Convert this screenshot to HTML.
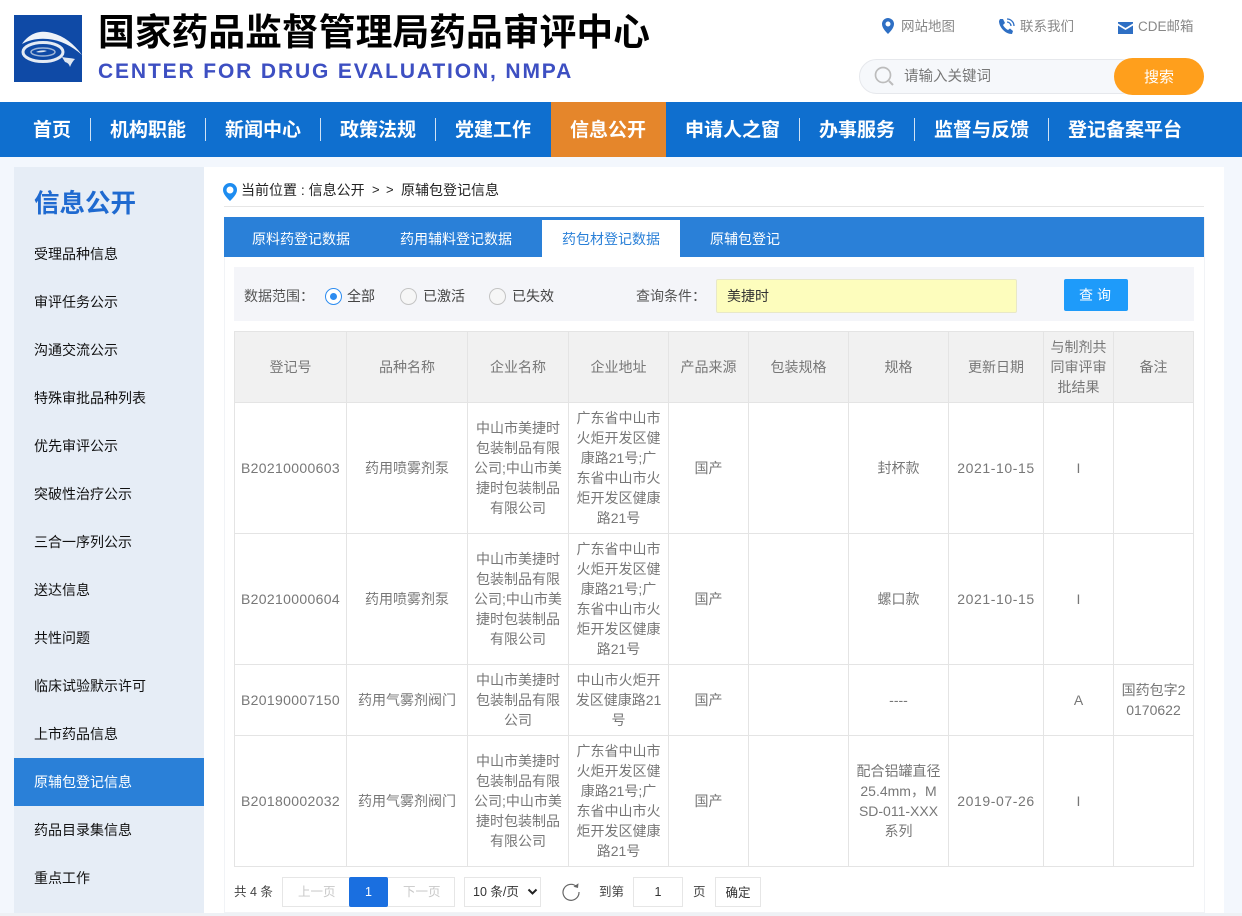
<!DOCTYPE html>
<html lang="zh-CN"><head><meta charset="utf-8"><title>信息公开</title>
<style>
*{box-sizing:border-box;margin:0;padding:0}
html,body{width:1242px;height:916px;overflow:hidden;background:#f3f7fd;font-family:"Liberation Sans","Noto Sans CJK SC",sans-serif;color:#666}
.a{position:absolute;white-space:nowrap}
#hd{position:absolute;left:0;top:0;width:1242px;height:102px;background:#fff}
#nav{position:absolute;left:0;top:102px;width:1242px;height:55px;background:#0f6fcf}
#nav span{position:absolute;top:1px;line-height:55px;font-size:19px;font-weight:700;color:#fff;white-space:nowrap}
#nav i{position:absolute;top:16px;width:1px;height:23px;background:#cfe2f5}
#side{position:absolute;left:14px;top:167px;width:190px;height:746px;background:#e6edf6}
#side div{position:absolute;left:0;width:190px;height:48px;line-height:48px;padding-left:20px;font-size:14px;color:#111}
#main{position:absolute;left:204px;top:167px;width:1020px;height:746px;background:#fff}
table{position:absolute;left:234px;top:331px;width:959px;border-collapse:collapse;table-layout:fixed;font-size:14px;line-height:20px;color:#777;text-align:center}
td,th{border:1px solid #e4e4e4;padding:0;font-weight:400;vertical-align:middle}
th{background:#f1f1f1;color:#777}
.n{letter-spacing:.34px}
.d{letter-spacing:.6px}
.radio{position:absolute;top:288px;width:17px;height:17px;border-radius:50%;border:1px solid #c4c4c4;background:#f6f6f6}
.pg{position:absolute;top:877px;height:30px;border:1px solid #e6e6e6;background:#fff;font-size:12.5px;line-height:29px;text-align:center}
</style></head><body>
<div id="hd">
<svg class="a" style="left:14px;top:15px" width="72" height="68" viewBox="0 0 72 68"><rect width="68" height="67" fill="#0f4aa6"/><path d="M8 29C16 17 28 15 38 18C50 21 60 29 68 40C58 31 46 25 34 24C24 23 15 25 8 29Z" fill="#eef3f9"/><ellipse cx="29" cy="37" rx="20" ry="9.500" fill="none" stroke="#e4ebf4" stroke-width="3"/><ellipse cx="29" cy="37" rx="12" ry="4" fill="none" stroke="#9fb6d8" stroke-width="1.500"/><path d="M22 37c4-2 8-2 11-1-3 1-6 2-11 1zM48 42c5 1 9 1 13 2-2 2-4 5-5 8-1-3-2-4-5-5z" fill="#dfe7f1"/></svg>
<div class="a" style="left:98px;top:9px;font-size:36.8px;line-height:48px;font-weight:700;color:#000">国家药品监督管理局药品审评中心</div>
<div class="a" style="left:98px;top:59px;font-size:21px;line-height:26px;font-weight:700;color:#3d4fc2;letter-spacing:1.87px">CENTER FOR DRUG EVALUATION, NMPA</div>
<svg class="a" style="left:881px;top:17px" width="14" height="18" viewBox="0 0 14 18"><path fill-rule="evenodd" d="M7 1a6 6 0 0 1 6 6c0 4-4 8-6 10C5 15 1 11 1 7a6 6 0 0 1 6-6zm0 3.500a2.500 2.500 0 1 0 0 5 2.500 2.500 0 0 0 0-5z" fill="#2e6fc4"/></svg>
<div class="a" style="left:901px;top:18px;font-size:13.500px;line-height:18px;color:#888">网站地图</div>
<svg class="a" style="left:998px;top:18px" width="17" height="17" viewBox="0 0 17 17"><path d="M2 1l3 0 2 4-2 2c1 2 3 4 5 5l2-1.500 3 2.500-1 3c-7 0-13-7-13-13z" fill="#2e6fc4"/><path d="M9 4a4 4 0 0 1 4 4M9 1a7 7 0 0 1 7 7" fill="none" stroke="#2e6fc4" stroke-width="1.300"/></svg>
<div class="a" style="left:1020px;top:18px;font-size:13.500px;line-height:18px;color:#888">联系我们</div>
<svg class="a" style="left:1118px;top:22px" width="15" height="12" viewBox="0 0 15 12"><path d="M0 0h15v1.500L7.500 6 0 1.500zM0 3.500l7.500 4.500L15 3.500V12H0z" fill="#2e6fc4"/></svg>
<div class="a" style="left:1138px;top:18px;font-size:13.500px;line-height:18px;color:#888">CDE邮箱</div>
<div class="a" style="left:859px;top:59px;width:280px;height:35px;border:1px solid #e6e8ec;border-radius:18px;background:#f6f8fb"></div>
<svg class="a" style="left:874px;top:66px" width="21" height="21" viewBox="0 0 21 21"><circle cx="9" cy="9" r="7.500" fill="none" stroke="#bcbcbc" stroke-width="1.700"/><path d="M15 15l4 4" stroke="#bcbcbc" stroke-width="2"/></svg>
<div class="a" style="left:904px;top:67px;font-size:14.500px;line-height:20px;color:#777">请输入关键词</div>
<div class="a" style="left:1114px;top:58px;width:90px;height:37px;border-radius:19px;background:#ff9f1c;color:#fff;font-size:15px;line-height:39px;text-align:center">搜索</div>
</div>
<div id="nav">
<span style="left:33px">首页</span><i style="left:90px"></i>
<span style="left:110px">机构职能</span><i style="left:205px"></i>
<span style="left:225px">新闻中心</span><i style="left:320px"></i>
<span style="left:340px">政策法规</span><i style="left:435px"></i>
<span style="left:455px">党建工作</span>
<div class="a" style="left:551px;top:0;width:115px;height:55px;background:#e5862b"></div>
<span style="left:570px">信息公开</span>
<span style="left:685px">申请人之窗</span><i style="left:799px"></i>
<span style="left:819px">办事服务</span><i style="left:914px"></i>
<span style="left:934px">监督与反馈</span><i style="left:1048px"></i>
<span style="left:1068px">登记备案平台</span>
</div>
<div id="side">
<p class="a" style="left:20px;top:19px;font-size:25.500px;line-height:36px;font-weight:700;color:#1f6ad0">信息公开</p>
<div style="top:63px">受理品种信息</div>
<div style="top:111px">审评任务公示</div>
<div style="top:159px">沟通交流公示</div>
<div style="top:207px">特殊审批品种列表</div>
<div style="top:255px">优先审评公示</div>
<div style="top:303px">突破性治疗公示</div>
<div style="top:351px">三合一序列公示</div>
<div style="top:399px">送达信息</div>
<div style="top:447px">共性问题</div>
<div style="top:495px">临床试验默示许可</div>
<div style="top:543px">上市药品信息</div>
<div style="top:591px;background:#2a80d8;color:#fff">原辅包登记信息</div>
<div style="top:639px">药品目录集信息</div>
<div style="top:687px">重点工作</div>
</div>
<div id="main"></div>
<svg class="a" style="left:223px;top:183px" width="14" height="18" viewBox="0 0 14 18"><path fill-rule="evenodd" d="M7 0a7 7 0 0 1 7 7c0 4-4 8-7 11C4 15 0 11 0 7a7 7 0 0 1 7-7zm0 3.500a3.500 3.500 0 1 0 0 7 3.500 3.500 0 0 0 0-7z" fill="#1d8cf0"/></svg>
<div class="a" style="left:241px;top:180px;font-size:14px;line-height:20px;color:#222">当前位置 : 信息公开</div>
<div class="a" style="left:372px;top:180px;font-size:13px;line-height:20px;color:#222">&gt;</div>
<div class="a" style="left:386px;top:180px;font-size:13px;line-height:20px;color:#222">&gt;</div>
<div class="a" style="left:401px;top:180px;font-size:14px;line-height:20px;color:#222">原辅包登记信息</div>
<div class="a" style="left:224px;top:206px;width:980px;height:1px;background:#e6e6e6"></div>
<div class="a" style="left:224px;top:217px;width:981px;height:696px;border:1px solid #f1f3f6;border-top:0"></div>
<div class="a" style="left:224px;top:217px;width:980px;height:40px;background:#2a80d8"></div>
<div class="a" style="left:542px;top:220px;width:138px;height:37px;background:#fff"></div>
<div class="a" style="left:252px;top:229px;font-size:14px;line-height:20px;color:#fff">原料药登记数据</div>
<div class="a" style="left:400px;top:229px;font-size:14px;line-height:20px;color:#fff">药用辅料登记数据</div>
<div class="a" style="left:562px;top:229px;font-size:14px;line-height:20px;color:#2a80d8">药包材登记数据</div>
<div class="a" style="left:710px;top:229px;font-size:14px;line-height:20px;color:#fff">原辅包登记</div>
<div class="a" style="left:234px;top:267px;width:960px;height:54px;background:#f4f5f9"></div>
<div class="a" style="left:244px;top:286px;font-size:14px;line-height:20px;color:#555">数据范围：</div>
<div class="radio" style="left:325px;border-color:#2d8cf0;background:#fff"></div>
<div class="a" style="left:330px;top:293px;width:7px;height:7px;border-radius:50%;background:#2d8cf0"></div>
<div class="a" style="left:347px;top:286px;font-size:14px;line-height:20px;color:#444">全部</div>
<div class="radio" style="left:400px"></div>
<div class="a" style="left:423px;top:286px;font-size:14px;line-height:20px;color:#444">已激活</div>
<div class="radio" style="left:489px"></div>
<div class="a" style="left:512px;top:286px;font-size:14px;line-height:20px;color:#444">已失效</div>
<div class="a" style="left:636px;top:286px;font-size:14px;line-height:20px;color:#555">查询条件：</div>
<div class="a" style="left:716px;top:279px;width:301px;height:34px;background:#fdfdbd;border:1px solid #e8e8c8;border-radius:2px;font-size:14px;line-height:32px;padding-left:10px;color:#333">美捷时</div>
<div class="a" style="left:1064px;top:279px;width:64px;height:32px;background:#1e9bfa;border-radius:2px;color:#fff;font-size:14px;line-height:32px;text-align:center;letter-spacing:4px;padding-left:2px">查询</div>
<table>
<colgroup><col style="width:112px"><col style="width:121px"><col style="width:101px"><col style="width:100px"><col style="width:80px"><col style="width:100px"><col style="width:100px"><col style="width:95px"><col style="width:70px"><col style="width:80px"></colgroup>
<tr style="height:71px"><th>登记号</th><th>品种名称</th><th>企业名称</th><th>企业地址</th><th>产品来源</th><th>包装规格</th><th>规格</th><th>更新日期</th><th>与制剂共<br>同审评审<br>批结果</th><th>备注</th></tr>
<tr style="height:131px"><td class="n">B20210000603</td><td>药用喷雾剂泵</td><td>中山市美捷时<br>包装制品有限<br>公司;中山市美<br>捷时包装制品<br>有限公司</td><td>广东省中山市<br>火炬开发区健<br>康路21号;广<br>东省中山市火<br>炬开发区健康<br>路21号</td><td>国产</td><td></td><td>封杯款</td><td class="d">2021-10-15</td><td>I</td><td></td></tr>
<tr style="height:131px"><td class="n">B20210000604</td><td>药用喷雾剂泵</td><td>中山市美捷时<br>包装制品有限<br>公司;中山市美<br>捷时包装制品<br>有限公司</td><td>广东省中山市<br>火炬开发区健<br>康路21号;广<br>东省中山市火<br>炬开发区健康<br>路21号</td><td>国产</td><td></td><td>螺口款</td><td class="d">2021-10-15</td><td>I</td><td></td></tr>
<tr style="height:71px"><td class="n">B20190007150</td><td>药用气雾剂阀门</td><td>中山市美捷时<br>包装制品有限<br>公司</td><td>中山市火炬开<br>发区健康路21<br>号</td><td>国产</td><td></td><td>----</td><td></td><td>A</td><td>国药包字2<br>0170622</td></tr>
<tr style="height:131px"><td class="n">B20180002032</td><td>药用气雾剂阀门</td><td>中山市美捷时<br>包装制品有限<br>公司;中山市美<br>捷时包装制品<br>有限公司</td><td>广东省中山市<br>火炬开发区健<br>康路21号;广<br>东省中山市火<br>炬开发区健康<br>路21号</td><td>国产</td><td></td><td>配合铝罐直径<br>25.4mm，M<br>SD-011-XXX<br>系列</td><td class="d">2019-07-26</td><td>I</td><td></td></tr>
</table>
<div class="a" style="left:234px;top:883px;font-size:12.500px;line-height:18px;color:#444">共 4 条</div>
<div class="pg" style="left:282px;width:173px"></div>
<div class="a" style="left:298px;top:883px;font-size:12.500px;line-height:18px;color:#c8c8c8">上一页</div>
<div class="a" style="left:349px;top:877px;width:39px;height:30px;background:#1a6fe0;border-radius:2px;color:#fff;font-size:12.500px;line-height:30px;text-align:center">1</div>
<div class="a" style="left:403px;top:883px;font-size:12.500px;line-height:18px;color:#c8c8c8">下一页</div>
<div class="pg" style="left:464px;width:77px;color:#333;text-align:left;padding-left:8px">10 条/页</div>
<svg class="a" style="left:527px;top:888px" width="11" height="8" viewBox="0 0 11 8"><path d="M1.500 1.500L5.500 5.500 9.500 1.500" fill="none" stroke="#222" stroke-width="2"/></svg>
<svg class="a" style="left:561px;top:882px" width="20" height="20" viewBox="0 0 20 20"><path d="M15.500 4.500A8 8 0 1 0 18 10" fill="none" stroke="#666" stroke-width="1.200"/><path d="M12.500 4.800L17 6l.5-4.800z" fill="#666"/></svg>
<div class="a" style="left:599px;top:883px;font-size:12.500px;line-height:18px;color:#444">到第</div>
<div class="pg" style="left:633px;width:50px;color:#333">1</div>
<div class="a" style="left:693px;top:883px;font-size:12.500px;line-height:18px;color:#444">页</div>
<div class="pg" style="left:715px;width:46px;color:#333;line-height:31px">确定</div>
<div class="a" style="left:0;top:913px;width:1242px;height:3px;background:#eef1f5"></div>
</body></html>
